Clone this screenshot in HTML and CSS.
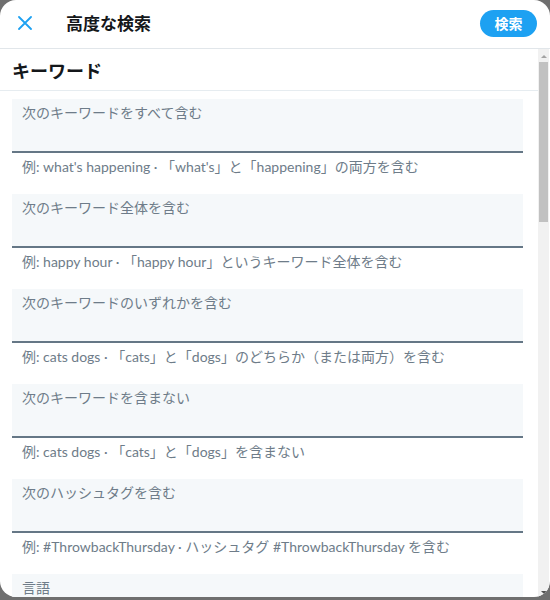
FILE: index.html
```html
<!DOCTYPE html>
<html lang="ja">
<head>
<meta charset="utf-8">
<link rel="stylesheet" href="styles.css">
</head>
<body>
<div class="modal">
  <header class="head">
    <button class="close" aria-label="閉じる">
      <svg viewBox="0 0 14 14" width="14" height="14"><path d="M1 1 L13 13 M13 1 L1 13" stroke="#1da1f2" stroke-width="1.8" fill="none" stroke-linecap="round"/></svg>
    </button>
    <h1 class="title">高度な検索</h1>
    <button class="search">検索</button>
  </header>
  <div class="body">
    <div class="scroll">
      <h2 class="section">キーワード</h2>
      <div class="fields">
        <div class="field">
          <div class="input">次のキーワードをすべて含む</div>
          <div class="hint">例: what's happening · 「what's」と「happening」の両方を含む</div>
        </div>
        <div class="field">
          <div class="input">次のキーワード全体を含む</div>
          <div class="hint">例: happy hour · 「happy hour」というキーワード全体を含む</div>
        </div>
        <div class="field">
          <div class="input">次のキーワードのいずれかを含む</div>
          <div class="hint">例: cats dogs · 「cats」と「dogs」のどちらか（または両方）を含む</div>
        </div>
        <div class="field">
          <div class="input">次のキーワードを含まない</div>
          <div class="hint">例: cats dogs · 「cats」と「dogs」を含まない</div>
        </div>
        <div class="field">
          <div class="input">次のハッシュタグを含む</div>
          <div class="hint">例: #ThrowbackThursday · ハッシュタグ #ThrowbackThursday を含む</div>
        </div>
        <div class="field">
          <div class="input">言語</div>
        </div>
      </div>
    </div>
    <div class="scrollbar">
      <div class="arrow up"></div>
      <div class="track"><div class="thumb"></div></div>
      <div class="arrow down"></div>
    </div>
  </div>
</div>
</body>
</html>
```

FILE: styles.css
```css
* { box-sizing: border-box; }
html, body { margin: 0; padding: 0; }
body {
  width: 550px;
  height: 600px;
  background: #6f6f6f;
  font-family: "Noto Sans", "Noto Sans CJK JP", sans-serif;
  overflow: hidden;
}
.modal {
  width: 550px;
  height: 597px;
  background: #fff;
  border-radius: 16px;
  overflow: hidden;
  display: flex;
  flex-direction: column;
}
.head {
  height: 49px;
  flex: none;
  display: flex;
  align-items: center;
  border-bottom: 1px solid #e1e6ea;
  padding: 0 13px 0 18px;
}
.close {
  width: 14px;
  height: 14px;
  padding: 0;
  border: 0;
  background: none;
  display: flex;
  margin-top: -2px;
}
.title {
  margin: 0 0 0 34px;
  font-size: 17px;
  font-weight: 700;
  color: #14171a;
  flex: 1;
  line-height: 1;
  margin-top: -2px;
}
.search {
  width: 57px;
  height: 27px;
  border: 0;
  border-radius: 14px;
  background: #1da1f2;
  color: #fff;
  font-family: inherit;
  font-size: 14px;
  font-weight: 700;
  padding: 0;
  margin-top: -2px;
}
.body {
  flex: 1;
  display: flex;
  min-height: 0;
}
.scroll {
  flex: 1;
  overflow: hidden;
}
.section {
  margin: 0;
  height: 42px;
  padding: 0 12px;
  display: flex;
  align-items: center;
  font-size: 18px;
  font-weight: 700;
  color: #14171a;
  border-bottom: 1px solid #e6ecf0;
}
.fields {
  padding: 8px 15px 0 12px;
}
.field {
  height: 95px;
}
.input {
  height: 54px;
  background: #f5f8fa;
  border-bottom: 2px solid #657786;
  padding: 4px 10px 0;
  font-size: 14px;
  line-height: 20px;
  color: #6e7c89;
}
.hint {
  padding: 5px 10px 0;
  font-family: "Lato", "Noto Sans CJK JP", sans-serif;
  font-size: 14px;
  line-height: 18px;
  color: #6e7c89;
  white-space: nowrap;
}
.scrollbar {
  width: 11px;
  flex: none;
  margin-right: 1px;
  background: #f1f1f1;
  display: flex;
  flex-direction: column;
  padding-top: 2px;
}
.arrow {
  height: 10px;
  display: flex;
  align-items: center;
  justify-content: center;
}
.arrow::before {
  content: "";
  border-left: 3px solid transparent;
  border-right: 3px solid transparent;
}
.up::before { border-bottom: 3px solid #a3a3a3; }
.down::before { border-top: 3px solid #505050; }
.track {
  flex: 1;
  padding: 1px 1px;
}
.thumb {
  height: 160px;
  background: #c1c1c1;
}
```
